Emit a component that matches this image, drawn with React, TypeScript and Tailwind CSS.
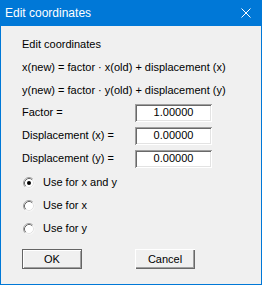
import React from "react";

const font = { fontFamily: '"Liberation Sans", Arial, sans-serif' };

function Field({ label, value }: { label: string; value: string }) {
  return (
    <div className="flex h-[23px] items-center">
      <span className="w-[113px]">{label}</span>
      <div className="flex h-[18px] w-[77px] items-center justify-center bg-white shadow-[inset_1px_1px_0_#a0a0a0,inset_-1px_-1px_0_#ffffff,inset_2px_2px_0_#696969,inset_-2px_-2px_0_#e3e3e3]">
        {value}
      </div>
    </div>
  );
}

function Radio({ label, checked }: { label: string; checked?: boolean }) {
  return (
    <div className="flex h-[23px] items-center">
      <svg width="12" height="12" viewBox="0 0 12 12" className="ml-[1px] mr-[8px]">
        <circle cx="6" cy="6" r="5.5" fill="#ffffff" />
        <path d="M2.11 9.89 A5.5 5.5 0 0 1 9.89 2.11" stroke="#a0a0a0" strokeWidth="1" fill="none" />
        <path d="M9.89 2.11 A5.5 5.5 0 0 1 2.11 9.89" stroke="#f4f4f4" strokeWidth="1" fill="none" />
        <path d="M2.82 9.18 A4.5 4.5 0 0 1 9.18 2.82" stroke="#696969" strokeWidth="1" fill="none" />
        <path d="M9.18 2.82 A4.5 4.5 0 0 1 2.82 9.18" stroke="#e3e3e3" strokeWidth="1" fill="none" />
        {checked && <circle cx="6" cy="6" r="2" fill="#000000" />}
      </svg>
      <span>{label}</span>
    </div>
  );
}

function Button({ label, isDefault }: { label: string; isDefault?: boolean }) {
  return (
    <div
      className={`flex h-[20px] w-[60px] items-center justify-center bg-[#f0f0f0] ${
        isDefault
          ? "shadow-[inset_0_0_0_1px_#646464,inset_2px_2px_0_#ffffff,inset_-2px_-2px_0_#a0a0a0]"
          : "shadow-[inset_1px_1px_0_#ffffff,inset_-1px_-1px_0_#696969,inset_-2px_-2px_0_#a0a0a0]"
      }`}
    >
      {label}
    </div>
  );
}

export default function App() {
  return (
    <div className="flex h-[285px] w-[262px] flex-col bg-[#0078d7] text-[11px] text-black" style={font}>
      <div className="flex h-[26px] items-center justify-between pl-[5px] pr-[11px] text-[12px] text-white">
        <span>Edit coordinates</span>
        <svg width="10" height="10" viewBox="0 0 10 10">
          <path d="M0.5 0.5 L9.5 9.5 M9.5 0.5 L0.5 9.5" stroke="#ffffff" strokeWidth="1" />
        </svg>
      </div>
      <div className="mx-[1px] mb-[1px] flex flex-1 flex-col bg-[#f0f0f0] pl-[21px] pt-[6px]">
        <div className="flex h-[24px] items-center">Edit coordinates</div>
        <div className="flex h-[23px] items-center">x(new) = factor · x(old) + displacement (x)</div>
        <div className="flex h-[22px] items-center">y(new) = factor · y(old) + displacement (y)</div>
        <Field label="Factor =" value="1.00000" />
        <Field label="Displacement (x) =" value="0.00000" />
        <Field label="Displacement (y) =" value="0.00000" />
        <div className="mt-[1px]">
          <Radio label="Use for x and y" checked />
          <Radio label="Use for x" />
          <Radio label="Use for y" />
        </div>
        <div className="mt-[9px] flex gap-[53px]">
          <Button label="OK" isDefault />
          <Button label="Cancel" />
        </div>
      </div>
    </div>
  );
}
